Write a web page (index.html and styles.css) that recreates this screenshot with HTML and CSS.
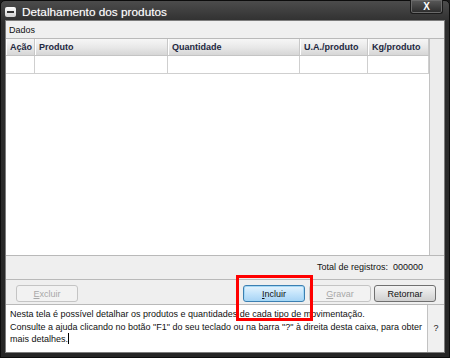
FILE: index.html
```html
<!DOCTYPE html>
<html lang="pt">
<head>
    <meta charset="UTF-8">
    <title>Detalhamento dos produtos</title>
    <link rel="stylesheet" href="styles.css">
</head>
<body>
    <div class="window">
        <div class="titlebar">
            <span class="title-icon"><span></span></span>
            <span class="title-text">Detalhamento dos produtos</span>
            <span class="close-btn">X</span>
        </div>
        <div class="client">
            <div class="section-label">Dados</div>
            <div class="grid-area">
                <div class="grid">
                    <div class="grid-row grid-head">
                        <div class="col col-acao">Ação</div>
                        <div class="col col-produto">Produto</div>
                        <div class="col col-qtd">Quantidade</div>
                        <div class="col col-ua">U.A./produto</div>
                        <div class="col col-kg">Kg/produto</div>
                    </div>
                    <div class="grid-row grid-line">
                        <div class="col col-acao"></div>
                        <div class="col col-produto"></div>
                        <div class="col col-qtd"></div>
                        <div class="col col-ua"></div>
                        <div class="col col-kg"></div>
                    </div>
                </div>
                <div class="side-col"></div>
            </div>
            <div class="totals">Total de registros:&nbsp; 000000</div>
            <div class="actions">
                <button class="btn" disabled><u>E</u>xcluir</button>
                <div class="spacer"></div>
                <div class="highlight-wrap">
                    <button class="btn btn-primary"><u>I</u>ncluir</button>
                    <span class="highlight"></span>
                </div>
                <button class="btn" disabled><u>G</u>ravar</button>
                <button class="btn btn-normal">Retornar</button>
            </div>
            <div class="help">
                <div class="help-text">Nesta tela é possível detalhar os produtos e quantidades de cada tipo de movimentação.<br>Consulte a ajuda clicando no botão "F1" do seu teclado ou na barra "?" à direita desta caixa, para obter mais detalhes.<span class="caret"></span></div>
                <div class="help-q">?</div>
            </div>
        </div>
    </div>
</body>
</html>
```

FILE: styles.css
```css
:root {
    --frame: #2c2c2c;
    --panel: #efefef;
    --line: #b9b9b9;
    --grid-line: #cfcfcf;
    --head-text: #1d2740;
    --text: #111111;
}

body {
    margin: 0;
    background: #1a1a1a;
    font-family: "Liberation Sans", Arial, sans-serif;
}

.window {
    width: 450px;
    height: 358px;
    box-sizing: border-box;
    background: linear-gradient(#4c4c4c, #2e2e2e 22px, #262626);
    border: 1px solid #0c0c0c;
    border-radius: 5px 5px 0 0;
    display: flex;
    flex-direction: column;
}

.titlebar {
    height: 21px;
    display: flex;
    align-items: center;
    padding-left: 4px;
    position: relative;
}

.title-icon {
    width: 11px;
    height: 10px;
    background: linear-gradient(#ffffff, #d0d0d0);
    border-radius: 2px;
    display: flex;
    align-items: center;
    justify-content: center;
    margin-top: 3px;
}

.title-icon span {
    width: 7px;
    height: 2px;
    background: #333;
}

.title-text {
    color: #ffffff;
    font-size: 11.8px;
    margin-left: 6px;
    margin-top: 2px;
    text-shadow: 0 0 1px rgba(255, 255, 255, 0.4);
}

.close-btn {
    position: absolute;
    right: 6px;
    top: -1px;
    width: 33px;
    height: 14px;
    box-sizing: border-box;
    background: linear-gradient(#5a5a5a, #2a2a2a);
    border: 1px solid #1a1a1a;
    border-top: none;
    border-radius: 0 0 3px 3px;
    box-shadow: inset 0 0 0 1px #6a6a6a;
    color: #fff;
    font-size: 10px;
    font-weight: bold;
    text-align: center;
    line-height: 13px;
}

.client {
    flex: 1;
    margin: 0 4px 4px 4px;
    background: var(--panel);
    border: 1px solid #7c7c7c;
    display: flex;
    flex-direction: column;
    font-size: 9px;
    color: var(--text);
}

.section-label {
    height: 17px;
    line-height: 18px;
    padding-left: 3px;
}

.grid-area {
    height: 216px;
    display: flex;
    border-top: 1px solid var(--line);
}

.grid {
    flex: 1;
    background: #ffffff;
}

.grid-row {
    display: flex;
}

.grid-head {
    height: 16px;
    background: linear-gradient(#f6f6f6, #e9e9e9 50%, #d6d6d6);
    border-bottom: 1px solid #c4c4c4;
}

.grid-head .col {
    font-weight: bold;
    color: var(--head-text);
    line-height: 16px;
    padding-left: 4px;
    border-right: 1px solid #c8c8c8;
    box-shadow: inset 1px 0 0 #ffffff;
}

.grid-line {
    height: 17px;
    border-bottom: 1px solid var(--grid-line);
}

.grid-line .col {
    border-right: 1px solid var(--grid-line);
}

.col {
    box-sizing: border-box;
    height: 100%;
}

.col-acao { width: 29px; }
.col-produto { width: 133px; }
.col-qtd { width: 132px; }
.col-ua { width: 68px; }
.col-kg { width: 61px; }

.side-col {
    width: 16px;
    background: #ececec;
    border-left: 1px solid #c2c2c2;
}

.totals {
    height: 23px;
    line-height: 23px;
    border-top: 1px solid var(--line);
    text-align: right;
    padding-right: 21px;
}

.actions {
    height: 25px;
    border-top: 1px solid var(--line);
    display: flex;
    align-items: flex-start;
    padding: 5px 8px 0 10px;
    box-sizing: border-box;
    gap: 3px;
}

.spacer {
    flex: 1;
}

.btn {
    width: 62px;
    height: 17px;
    padding: 0;
    font-family: inherit;
    font-size: 9px;
    border-radius: 3px;
    border: 1px solid #707070;
    background: linear-gradient(#f4f4f4, #e2e2e2 50%, #cfcfcf);
    color: #111;
}

.btn:disabled {
    border-color: #c4c4c4;
    background: #f2f2f2;
    color: #a8a8a8;
}

.btn-primary {
    border-color: #3c7fb1;
    background: linear-gradient(#e5f3fd, #c4e4fb 50%, #a7d3f5);
    box-shadow: inset 0 0 0 1px #a4d8f6;
}

.highlight-wrap {
    position: relative;
    margin-right: 1px;
}

.highlight {
    position: absolute;
    left: -7px;
    top: -10px;
    width: 77px;
    height: 46px;
    box-sizing: border-box;
    border: 3px solid #ff0000;
}

.help {
    flex: 1;
    display: flex;
    background: #ffffff;
    border-top: 1px solid var(--line);
}

.help-text {
    flex: 1;
    padding: 3px 4px;
    line-height: 12.5px;
}

.caret {
    display: inline-block;
    width: 1px;
    height: 11px;
    background: #000;
    vertical-align: -2px;
}

.help-q {
    width: 16px;
    background: #f0f0f0;
    border-left: 1px solid #c2c2c2;
    text-align: center;
    line-height: 47px;
    color: #222;
}
```
